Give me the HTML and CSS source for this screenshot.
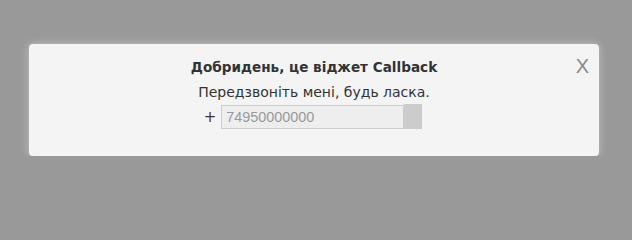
FILE: index.html
```html
<!DOCTYPE html>
<html lang="uk">
<head>
<meta charset="utf-8">
<title>Callback</title>
<link rel="stylesheet" href="styles.css">
</head>
<body>
<div class="overlay">
  <div class="widget">
    <span class="close">X</span>
    <div class="title">Добридень, це віджет Callback</div>
    <div class="subtitle">Передзвоніть мені, будь ласка.</div>
    <div class="phone-row">
      <span class="plus">+</span>
      <input class="phone" type="text" placeholder="74950000000">
      <button class="send" type="button"></button>
    </div>
  </div>
</div>
</body>
</html>
```
FILE: styles.css
```css
html, body {
  margin: 0;
  padding: 0;
  background: #999999;
}
.overlay {
  padding: 44px 33px 0 29px;
}
.widget {
  position: relative;
  box-sizing: border-box;
  height: 112px;
  background: #f4f4f4;
  border-radius: 4px;
  box-shadow: 0 0 8px rgba(255, 255, 255, 0.4);
  padding-top: 13px;
  text-align: center;
  font-family: "DejaVu Sans", sans-serif;
  color: #333333;
}
.close {
  position: absolute;
  top: 10px;
  right: 10px;
  font-family: "Liberation Sans", sans-serif;
  font-size: 20px;
  line-height: 24px;
  color: #8a8a8a;
}
.title {
  font-weight: bold;
  font-size: 13.6px;
  line-height: 20px;
}
.subtitle {
  margin-top: 5px;
  font-size: 14px;
  line-height: 20px;
}
.phone-row {
  margin-top: 2px;
  display: flex;
  justify-content: center;
  align-items: center;
}
.plus {
  font-size: 15px;
  color: #4a3020;
  margin-right: 5px;
}
.phone {
  box-sizing: border-box;
  width: 183px;
  height: 24px;
  border: 1px solid #cccccc;
  background: #eeeeee;
  padding: 0 4px;
  font-family: "Liberation Sans", sans-serif;
  font-size: 14.4px;
  color: #999999;
  outline: none;
}
.phone::placeholder {
  color: #999999;
}
.send {
  box-sizing: border-box;
  width: 18px;
  height: 25px;
  border: none;
  background: #cccccc;
  padding: 0;
  margin-right: 2px;
}
```
